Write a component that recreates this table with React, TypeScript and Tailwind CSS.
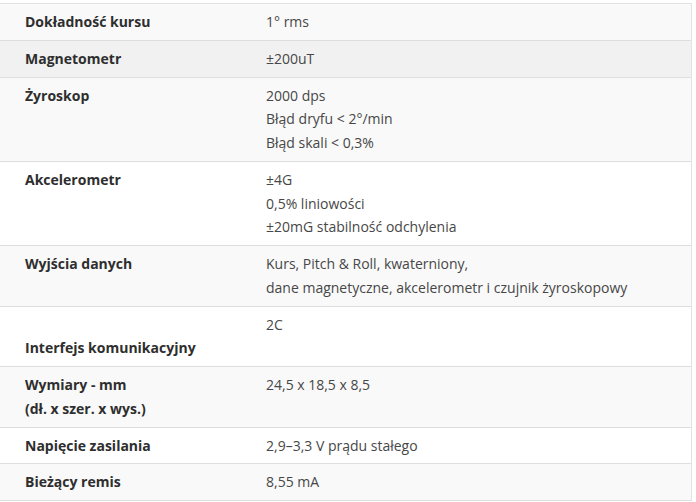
const rows: { label: string[]; value: string[]; bg: string }[] = [
    { label: ["Dokładność kursu"], value: ["1° rms"], bg: "bg-[#f9f9f9]" },
    { label: ["Magnetometr"], value: ["±200uT"], bg: "bg-[#f1f1f1]" },
    { label: ["Żyroskop"], value: ["2000 dps", "Błąd dryfu < 2°/min", "Błąd skali < 0,3%"], bg: "bg-[#f9f9f9]" },
    { label: ["Akcelerometr"], value: ["±4G", "0,5% liniowości", "±20mG stabilność odchylenia"], bg: "bg-white" },
    { label: ["Wyjścia danych"], value: ["Kurs, Pitch & Roll, kwaterniony,", "dane magnetyczne, akcelerometr i czujnik żyroskopowy"], bg: "bg-[#f9f9f9]" },
    { label: ["\u00a0", "Interfejs komunikacyjny"], value: ["2C"], bg: "bg-white" },
    { label: ["Wymiary - mm", "(dł. x szer. x wys.)"], value: ["24,5 x 18,5 x 8,5"], bg: "bg-[#f9f9f9]" },
    { label: ["Napięcie zasilania"], value: ["2,9–3,3 V prądu stałego"], bg: "bg-white" },
    { label: ["Bieżący remis"], value: ["8,55 mA"], bg: "bg-[#f9f9f9]" },
];

export default function App() {
    return (
        <div className="bg-white w-[696px] h-[502px] pt-[3px] overflow-hidden" style={{ fontFamily: '"Open Sans", sans-serif' }}>
            <div className="w-[692px] border-t border-r border-[#e2e2e2] text-[14px] leading-[23.75px]">
                {rows.map((row, i) => (
                    <div key={i} className={`grid grid-cols-[241px_1fr] border-b border-[#dedede] ${row.bg}`}>
                        <div className="pl-[25px] py-[6px] font-bold text-[#2e2e2e]">
                            {row.label.map((l, j) => (
                                <div key={j}>{l}</div>
                            ))}
                        </div>
                        <div className="pl-[25px] py-[6px] text-[#474747]">
                            {row.value.map((v, j) => (
                                <div key={j}>{v}</div>
                            ))}
                        </div>
                    </div>
                ))}
            </div>
        </div>
    );
}
